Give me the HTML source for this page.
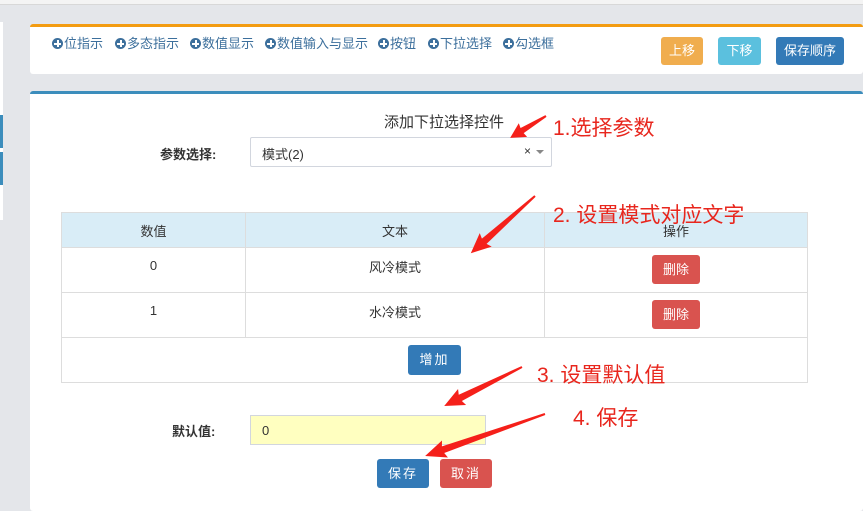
<!DOCTYPE html>
<html><head><meta charset="utf-8"><style>
*{margin:0;padding:0;box-sizing:border-box}
body{width:863px;height:501px;overflow:hidden;background:#e4e6ea;font-family:"Liberation Sans","Noto Sans CJK SC",sans-serif;font-size:13px;color:#333;position:relative}
.abs{position:absolute}
.btn{position:absolute;color:#fff;border-radius:3px;text-align:center;font-size:13px}
td,th{border:1px solid #ddd}
.nav{position:absolute;top:33px;color:#3c6f9c;font-size:13px;white-space:nowrap}
.nav i{display:inline-block;width:11px;height:11px;border-radius:50%;background:#3c6f9c;position:relative;vertical-align:-1px;margin-right:1px}
.nav i:before{content:"";position:absolute;left:2px;top:4.5px;width:7px;height:2px;background:#fff}
.nav i:after{content:"";position:absolute;left:4.5px;top:2px;width:2px;height:7px;background:#fff}
</style></head><body>
<div class="abs" style="left:0;top:0;width:863px;height:5px;background:#f4f4f4;border-bottom:1px solid #d8d8d8"></div>
<div class="abs" style="left:0;top:22px;width:3px;height:198px;background:#fff"></div>
<div class="abs" style="left:0;top:115px;width:3px;height:33px;background:#3c8dbc"></div>
<div class="abs" style="left:0;top:152px;width:3px;height:33px;background:#3c8dbc"></div>

<div class="abs" style="left:30px;top:24px;width:833px;height:50px;background:#fff;border-top:3px solid #f39c12;border-radius:3px"></div>
<div class="nav" style="left:52px"><i></i>位指示</div>
<div class="nav" style="left:115px"><i></i>多态指示</div>
<div class="nav" style="left:190px"><i></i>数值显示</div>
<div class="nav" style="left:265px"><i></i>数值输入与显示</div>
<div class="nav" style="left:378px"><i></i>按钮</div>
<div class="nav" style="left:428px"><i></i>下拉选择</div>
<div class="nav" style="left:503px"><i></i>勾选框</div>
<div class="btn" style="left:661px;top:37px;width:42px;height:28px;line-height:28px;background:#f0ad4e">上移</div>
<div class="btn" style="left:718px;top:37px;width:43px;height:28px;line-height:28px;background:#5bc0de">下移</div>
<div class="btn" style="left:776px;top:37px;width:68px;height:28px;line-height:28px;background:#337ab7">保存顺序</div>

<div class="abs" style="left:30px;top:91px;width:833px;height:420px;background:#fff;border-top:3px solid #3c8dbc;border-radius:3px"></div>
<div class="abs" style="left:384px;top:111px;font-size:15px;color:#333">添加下拉选择控件</div>
<div class="abs" style="left:160px;top:144px;font-weight:bold;font-size:13px">参数选择:</div>
<div class="abs" style="left:250px;top:137px;width:302px;height:30px;border:1px solid #d2d6de;border-radius:2px;padding:6px 11px;font-size:13px">模式(2)<span style="position:absolute;right:20px;top:6px;font-size:12px">×</span><span style="position:absolute;right:7px;top:12px;border:4px solid transparent;border-top:4px solid #888"></span></div>

<table class="abs" style="left:61px;top:212px;width:747px;border-collapse:collapse;text-align:center;font-size:13px">
<tr style="height:35px;background:#d9edf7"><td style="width:184px;font-weight:normal">数值</td><td style="width:299px">文本</td><td>操作</td></tr>
<tr style="height:45px"><td style="vertical-align:top;padding-top:10px">0</td><td style="vertical-align:top;padding-top:9px">风冷模式</td><td></td></tr>
<tr style="height:45px"><td style="vertical-align:top;padding-top:10px">1</td><td style="vertical-align:top;padding-top:9px">水冷模式</td><td></td></tr>
<tr style="height:45px"><td colspan="3"></td></tr>
</table>
<div class="btn" style="left:652px;top:255px;width:48px;height:29px;line-height:29px;background:#d9534f">删除</div>
<div class="btn" style="left:652px;top:300px;width:48px;height:29px;line-height:29px;background:#d9534f">删除</div>
<div class="btn" style="left:408px;top:345px;width:53px;height:30px;line-height:30px;background:#337ab7;letter-spacing:2px">增加</div>

<div class="abs" style="left:172px;top:421px;font-weight:bold">默认值:</div>
<div class="abs" style="left:250px;top:415px;width:236px;height:30px;background:#ffffc0;border:1px solid #d2d6de;padding:7px 11px">0</div>
<div class="btn" style="left:377px;top:459px;width:52px;height:29px;line-height:29px;background:#337ab7;letter-spacing:2px">保存</div>
<div class="btn" style="left:440px;top:459px;width:52px;height:29px;line-height:29px;background:#d9534f;letter-spacing:2px">取消</div>

<div class="abs" style="left:553px;top:112px;color:#e8261d;font-size:21px">1.选择参数</div>
<div class="abs" style="left:553px;top:199px;color:#e8261d;font-size:21px">2. 设置模式对应文字</div>
<div class="abs" style="left:537px;top:359px;color:#e8261d;font-size:21px">3. 设置默认值</div>
<div class="abs" style="left:573px;top:402px;color:#e8261d;font-size:21px">4. 保存</div>

<svg class="abs" style="left:0;top:0" width="863" height="501">
<g fill="#f5201a">
<polygon transform="translate(546,116) rotate(148.6)" points="0,-1 28,-3 27,-8 42,0 27,8 28,3 0,1"/>
<polygon transform="translate(535,196) rotate(138.3)" points="0,-1 68,-3.5 66,-9 86,0 66,9 68,3.5 0,1"/>
<polygon transform="translate(522,367) rotate(153.4)" points="0,-1 69,-3.5 67,-9 87,0 67,9 69,3.5 0,1"/>
<polygon transform="translate(545,414) rotate(160.7)" points="0,-1 108,-3.5 106,-9 127,0 106,9 108,3.5 0,1"/>
</g></svg>
</body></html>
